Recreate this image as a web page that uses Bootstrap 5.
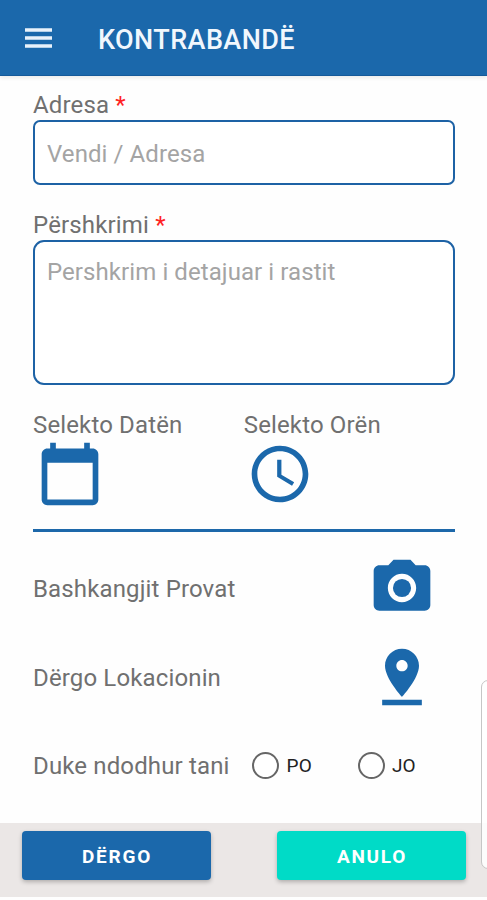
<!DOCTYPE html>
<html lang="sq">
<head>
<meta charset="utf-8">
<meta name="viewport" content="width=device-width, initial-scale=1">
<title>Kontrabandë</title>
<link rel="stylesheet" href="https://cdn.jsdelivr.net/npm/bootstrap@5.3.0/dist/css/bootstrap.min.css">
<style>
:root{--brand:#1b68ab}
body{font-family:Roboto,"Liberation Sans",sans-serif;font-size:24px;line-height:28px;color:#707070;height:900px;background:#fefefe;letter-spacing:.14px}
.topbar{height:76px;background:var(--brand);padding:0 24px;border-bottom:1px solid #155a9a;box-shadow:0 2px 4px rgba(0,0,0,.08)}
.topbar h1{font-size:27px;line-height:32px;font-weight:500;margin:4px 0 0 45px;letter-spacing:.42px;color:#f1f7fd}
.menu-btn svg{display:block;width:29px;height:20px}
main{padding:15px 32.5px 0 33px}
.form-label{display:block;height:29px;margin:0;letter-spacing:.16px}
.req{color:#f22}
.form-control,.form-control:focus{border:2px solid #1d62a5;padding:0 12px;font-size:24px;line-height:28px;letter-spacing:.08px;background:#fff;resize:none}
.form-control::placeholder{color:#a4a4a4;opacity:1}
.form-control.address{height:65px;border-radius:7px;margin-bottom:26px;padding-top:2px}
.form-control.details{height:145px;border-radius:11px;margin-bottom:26px;padding-top:16px}
.glyph{display:block;width:68px;height:68px;fill:var(--brand)}
.picker{width:211.5px}
.picker .glyph{margin:1px 0 0 2.5px}
.rule{height:3px;background:#1d68aa;margin-top:21px}
.line-row{padding-right:18.7px;margin-top:21.5px}
.line-row span{padding-top:2px}
.now-row{margin-top:40.5px}
.now-row>*{flex-shrink:0}
.now-row>span{width:219px}
.choice{width:105.5px;font-size:19px;color:#222;gap:7.5px}
.choice .form-check-input{width:27px;height:27px;border:2px solid #666;margin:0;background-color:#fff}
.actions{height:74px;background:#ebe7e6;padding:8px 21px 0 22px;margin-bottom:3px}
.action{width:189px;height:49px;border:0;border-radius:4px;color:#fff;font-size:19px;font-weight:700;letter-spacing:1.75px;padding:3px 0 0 1px;box-shadow:0 2px 4px rgba(0,0,0,.25)}
.send{background:var(--brand)}
.cancel{background:#00dbc7}
.edge-panel{position:absolute;right:-10px;top:680px;width:16px;height:189px;border:1px solid #c6c6c6;border-radius:7px;background:rgba(255,255,255,.85)}
</style>
</head>
<body class="d-flex flex-column position-relative overflow-hidden">
<header class="topbar d-flex align-items-center text-white flex-shrink-0">
  <button class="menu-btn btn p-0 border-0 text-white" aria-label="Menu"><svg viewBox="0 0 29 20" fill="#e9f2fb"><path d="M1 0.3h27v3.5H1zM1 8.2h27v3.5H1zM1 16.2h27v3.5H1z"/></svg></button>
  <h1>KONTRABANDË</h1>
</header>
<main class="flex-grow-1">
  <label class="form-label" for="adresa">Adresa <span class="req">*</span></label>
  <input id="adresa" class="form-control address" placeholder="Vendi / Adresa">
  <label class="form-label" for="pershkrimi">Përshkrimi <span class="req">*</span></label>
  <textarea id="pershkrimi" class="form-control details" placeholder="Pershkrim i detajuar i rastit"></textarea>
  <div class="d-flex">
    <div class="picker"><div>Selekto Datën</div>
      <svg class="glyph" viewBox="0 0 24 24"><path d="M20 3h-1V1h-2v2H7V1H5v2H4c-1.1 0-2 .9-2 2v16c0 1.1.9 2 2 2h16c1.1 0 2-.9 2-2V5c0-1.1-.9-2-2-2zm0 18H4V8h16v13z"/></svg></div>
    <div class="picker"><div>Selekto Orën</div>
      <svg class="glyph" viewBox="0 0 24 24"><path d="M11.99 2C6.47 2 2 6.48 2 12s4.47 10 9.99 10C17.52 22 22 17.52 22 12S17.52 2 11.99 2zM12 20c-4.42 0-8-3.58-8-8s3.58-8 8-8 8 3.58 8 8-3.58 8-8 8zm.5-13H11v6l5.25 3.15.75-1.23-4.5-2.67z"/></svg></div>
  </div>
  <div class="rule"></div>
  <div class="line-row d-flex justify-content-between align-items-center">
    <span>Bashkangjit Provat</span>
    <svg class="glyph" viewBox="0 0 24 24"><circle cx="12" cy="12" r="3.2"/><path d="M9 2L7.17 4H4c-1.1 0-2 .9-2 2v12c0 1.1.9 2 2 2h16c1.1 0 2-.9 2-2V6c0-1.1-.9-2-2-2h-3.17L15 2H9zm3 15c-2.76 0-5-2.24-5-5s2.24-5 5-5 5 2.24 5 5-2.24 5-5 5z"/></svg>
  </div>
  <div class="line-row d-flex justify-content-between align-items-center">
    <span>Dërgo Lokacionin</span>
    <svg class="glyph" viewBox="0 0 24 24"><path d="M18 8c0-3.31-2.69-6-6-6S6 4.69 6 8c0 4.5 6 11 6 11s6-6.5 6-11zm-8 0c0-1.1.9-2 2-2s2 .9 2 2-.89 2-2 2c-1.1 0-2-.9-2-2zM5 20v2h14v-2H5z"/></svg>
  </div>
  <div class="now-row d-flex align-items-center">
    <span>Duke ndodhur tani</span>
    <label class="choice d-flex align-items-center"><input class="form-check-input" type="radio" name="tani">PO</label>
    <label class="choice d-flex align-items-center"><input class="form-check-input" type="radio" name="tani">JO</label>
  </div>
</main>
<footer class="actions d-flex justify-content-between align-items-start flex-shrink-0">
  <button class="btn action send">DËRGO</button>
  <button class="btn action cancel">ANULO</button>
</footer>
<div class="edge-panel"></div>
<script src="https://cdn.jsdelivr.net/npm/bootstrap@5.3.0/dist/js/bootstrap.bundle.min.js"></script>
</body>
</html>
